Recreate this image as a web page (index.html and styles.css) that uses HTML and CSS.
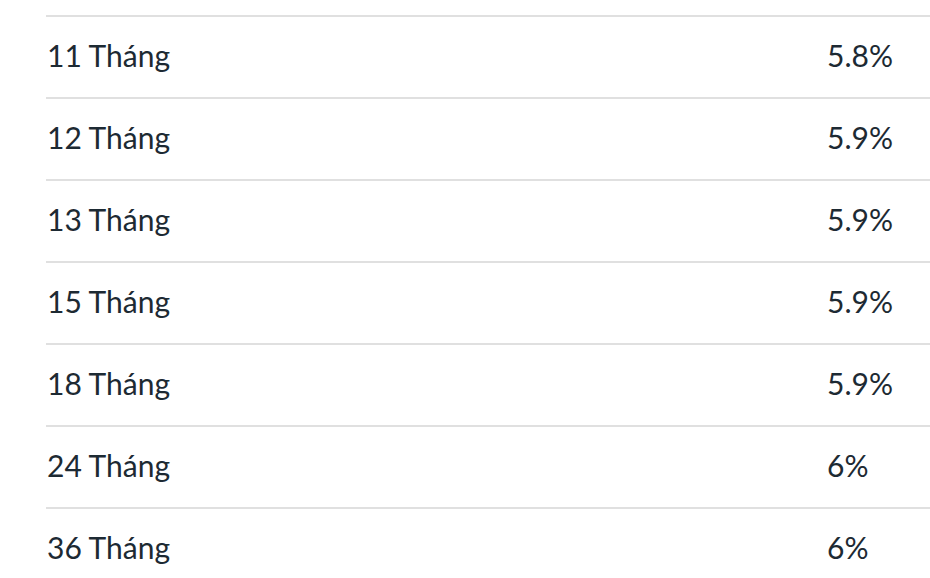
FILE: index.html
```html
<!DOCTYPE html>
<html lang="vi">
<head>
    <meta charset="UTF-8">
    <meta name="viewport" content="width=device-width, initial-scale=1.0">
    <title>Lãi suất</title>
    <link rel="stylesheet" href="styles.css">
</head>
<body>
    <div class="rates">
        <div class="row"><span class="term">11 Tháng</span><span class="rate">5.8%</span></div>
        <div class="row"><span class="term">12 Tháng</span><span class="rate">5.9%</span></div>
        <div class="row"><span class="term">13 Tháng</span><span class="rate">5.9%</span></div>
        <div class="row"><span class="term">15 Tháng</span><span class="rate">5.9%</span></div>
        <div class="row"><span class="term">18 Tháng</span><span class="rate">5.9%</span></div>
        <div class="row"><span class="term">24 Tháng</span><span class="rate">6%</span></div>
        <div class="row"><span class="term">36 Tháng</span><span class="rate">6%</span></div>
    </div>
</body>
</html>
```

FILE: styles.css
```css
body {
    margin: 0;
    background: #fff;
    font-family: 'Lato', 'Noto Sans', sans-serif;
    color: #1d2a33;
    overflow: hidden;
}
.rates {
    margin-left: 46px;
    padding-top: 15px;
}
.row {
    display: flex;
    align-items: center;
    box-sizing: border-box;
    height: 82px;
    padding-bottom: 4px;
    border-top: 2px solid #e0e0e0;
    font-size: 30px;
}
.term {
    width: 780px;
    padding-left: 1px;
}
.rate {
    flex: 1;
}
```
